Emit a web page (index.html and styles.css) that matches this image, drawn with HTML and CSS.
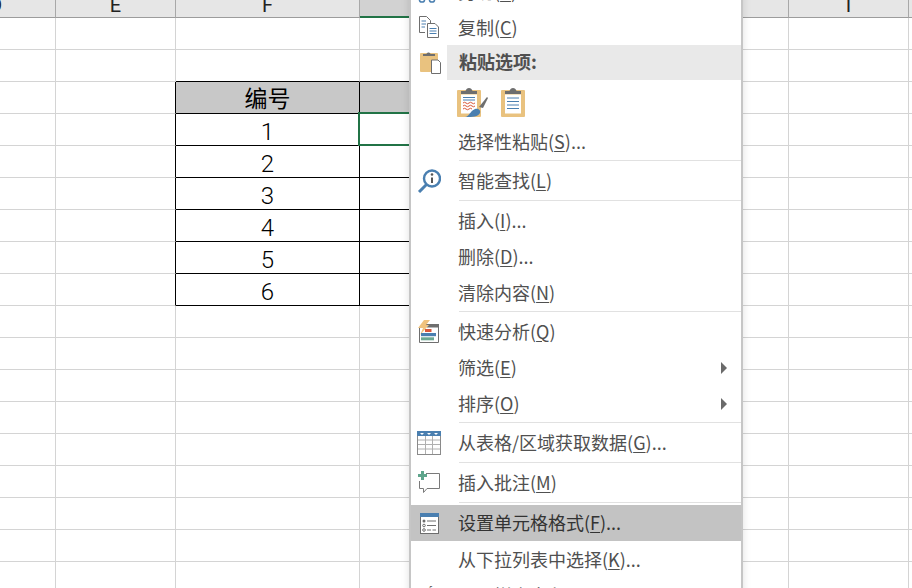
FILE: index.html
```html
<!DOCTYPE html>
<html lang="zh-CN">
<head>
<meta charset="utf-8">
<title>Excel 右键菜单</title>
<link rel="stylesheet" href="styles.css">
</head>
<body>
<div class="window">
  <table class="sheet">
    <colgroup><col class="w120"><col class="w120"><col class="w184"><col class="w184"><col class="w245"><col class="w120"><col class="w120"></colgroup>
    <tr class="head"><th>D</th><th>E</th><th>F</th><th class="active"></th><th></th><th>I</th><th></th></tr>
    <tr><td></td><td></td><td></td><td></td><td></td><td></td><td></td></tr>
    <tr><td></td><td></td><td class="kb"></td><td class="kb"></td><td></td><td></td><td></td></tr>
    <tr><td></td><td class="kr"></td><td class="title kr kb">编号</td><td class="title kb"></td><td></td><td></td><td></td></tr>
    <tr><td></td><td class="kr"></td><td class="kr kb">1</td><td class="kb sel"></td><td></td><td></td><td></td></tr>
    <tr><td></td><td class="kr"></td><td class="kr kb">2</td><td class="kb"></td><td></td><td></td><td></td></tr>
    <tr><td></td><td class="kr"></td><td class="kr kb">3</td><td class="kb"></td><td></td><td></td><td></td></tr>
    <tr><td></td><td class="kr"></td><td class="kr kb">4</td><td class="kb"></td><td></td><td></td><td></td></tr>
    <tr><td></td><td class="kr"></td><td class="kr kb">5</td><td class="kb"></td><td></td><td></td><td></td></tr>
    <tr><td></td><td class="kr"></td><td class="kr kb">6</td><td class="kb"></td><td></td><td></td><td></td></tr>
    <tr><td></td><td></td><td></td><td></td><td></td><td></td><td></td></tr>
    <tr><td></td><td></td><td></td><td></td><td></td><td></td><td></td></tr>
    <tr><td></td><td></td><td></td><td></td><td></td><td></td><td></td></tr>
    <tr><td></td><td></td><td></td><td></td><td></td><td></td><td></td></tr>
    <tr><td></td><td></td><td></td><td></td><td></td><td></td><td></td></tr>
    <tr><td></td><td></td><td></td><td></td><td></td><td></td><td></td></tr>
    <tr><td></td><td></td><td></td><td></td><td></td><td></td><td></td></tr>
    <tr><td></td><td></td><td></td><td></td><td></td><td></td><td></td></tr>
    <tr><td></td><td></td><td></td><td></td><td></td><td></td><td></td></tr>
  </table>

  <div class="menu">
    <div class="item">
      <span class="ico"><svg width="24" height="24" viewBox="0 0 24 24" fill="none"><circle cx="5" cy="19.500" r="2.600" stroke="#4a7fb0" stroke-width="1.500"/><circle cx="15" cy="19.500" r="2.600" stroke="#4a7fb0" stroke-width="1.500"/><path d="M6.500 17 14 3M13.500 17 6 3" stroke="#777"/></svg></span>
      <span class="lab">剪切(<u>T</u>)</span>
    </div>
    <div class="item copy">
      <span class="ico"><svg width="24" height="24" viewBox="0 0 24 24" fill="none"><path d="M8 16.500H2.500V.5H9.500L13.500 4.500V7" stroke="#6e6e6e"/><path d="M10.500 7.500H18L21.500 11V21.500H10.500Z" fill="#fff" stroke="#6e6e6e"/><path d="M4.500 5H9M4.500 8H9M4.500 11H8" stroke="#4a7fb0"/><path d="M12.500 12.500H19.500M12.500 15H19.500M12.500 17.500H19.500" stroke="#4a7fb0"/></svg></span>
      <span class="lab">复制(<u>C</u>)</span>
    </div>
    <div class="item paste">
      <span class="ico"><svg width="24" height="24" viewBox="0 0 24 24" fill="none"><rect x="3" y="2" width="18" height="19" rx="1" fill="#e9c27f"/><path d="M6 5V3H9.500C10 1 13 1 13.500 3H18V5Z" fill="#6e6e6e"/><path d="M14.500 9H21L23.500 11.500V22.500H14.500Z" fill="#fff" stroke="#6e6e6e"/></svg></span>
      <span class="lab">粘贴选项:</span>
    </div>
    <div class="opts">
      <svg width="32" height="30" viewBox="0 0 32 30" fill="none"><rect y="3" width="24" height="27" rx="1" fill="#e9c27f"/><path d="M4 7V4H8.500C9.500 0 14.500 0 15.500 4H20V7Z" fill="#6e6e6e"/><rect x="4" y="7.500" width="16" height="19" fill="#fff"/><path d="M6 10.500H18M6 13H18" stroke="#4a7fb0"/><path d="M6 16q1.500-1.500 3 0t3 0 3 0 3 0M6 19q1.500-1.500 3 0t3 0 3 0 3 0M6 22q1.500-1.500 3 0t3 0 3 0" stroke="#d9573a"/><path d="M22 20 30 10 31 11 26 21Z" fill="#6e6e6e"/><path d="M8 30C12 30 13 24 18 22 21 21 24 23 23 26 21 30 16 30 8 30Z" fill="#4a7fb0"/></svg>
      <svg width="24" height="30" viewBox="0 0 24 30" fill="none"><rect y="3" width="24" height="27" rx="1" fill="#e9c27f"/><path d="M4 7V4H8.500C9.500 0 14.500 0 15.500 4H20V7Z" fill="#6e6e6e"/><rect x="4" y="7.500" width="16" height="19" fill="#fff"/><path d="M6 11H18M6 14.500H18M6 18H18M6 21.500H18" stroke="#4a7fb0"/></svg>
    </div>
    <div class="item"><span class="ico"></span><span class="lab">选择性粘贴(<u>S</u>)...</span></div>
    <div class="sep"></div>
    <div class="item">
      <span class="ico"><svg width="24" height="24" viewBox="0 0 24 24" fill="none"><circle cx="15" cy="9.500" r="8" fill="#fff" stroke="#4a7fb0" stroke-width="2.400"/><path d="M9.500 15.500 2 23" stroke="#4a7fb0" stroke-width="3"/><path d="M15 8.500V14" stroke="#555" stroke-width="2"/><circle cx="15" cy="5.500" r="1.300" fill="#555"/></svg></span>
      <span class="lab">智能查找(<u>L</u>)</span>
    </div>
    <div class="sep gap"></div>
    <div class="item"><span class="ico"></span><span class="lab">插入(<u>I</u>)...</span></div>
    <div class="item"><span class="ico"></span><span class="lab">删除(<u>D</u>)...</span></div>
    <div class="item"><span class="ico"></span><span class="lab">清除内容(<u>N</u>)</span></div>
    <div class="sep"></div>
    <div class="item">
      <span class="ico"><svg width="24" height="24" viewBox="0 0 24 24" fill="none"><path d="M2.500 8V22.500H21.500V4.500H9" fill="#fff" stroke="#6e6e6e"/><rect x="10" y="4" width="12" height="3.500" fill="#6e6e6e"/><path d="M7 0H13L9 5H12L3 15 6 8H1Z" fill="#f0c27d"/><rect x="8" y="9" width="6.500" height="3" fill="#d9573a"/><rect x="4" y="13" width="15" height="3.200" fill="#4a7fb0"/><rect x="4" y="17.300" width="13" height="3" fill="#6aa892"/></svg></span>
      <span class="lab">快速分析(<u>Q</u>)</span>
    </div>
    <div class="item"><span class="ico"></span><span class="lab">筛选(<u>E</u>)</span><span class="arrow"></span></div>
    <div class="item"><span class="ico"></span><span class="lab">排序(<u>O</u>)</span><span class="arrow"></span></div>
    <div class="sep"></div>
    <div class="item">
      <span class="ico"><svg width="24" height="24" viewBox="0 0 24 24" fill="none"><rect x=".5" y=".5" width="23" height="23" fill="#fff" stroke="#8a8a8a"/><rect width="24" height="5" fill="#4a7fb0"/><path d="M3 2H7L5 4ZM10 2H14L12 4ZM17 2H21L19 4Z" fill="#fff"/><path d="M8.500 5V23M15.500 5V23M1 9H23M1 13.500H23M1 18H23" stroke="#b0b0b0"/></svg></span>
      <span class="lab">从表格/区域获取数据(<u>G</u>)...</span>
    </div>
    <div class="sep gap"></div>
    <div class="item">
      <span class="ico"><svg width="24" height="24" viewBox="0 0 24 24" fill="none"><path d="M9 2.500H22.500V17.500H10L6.500 21.500V17.500H2.500V10" stroke="#7a7a7a" stroke-linejoin="round"/><path d="M4 0H7V3H10V6H7V9H4V6H1V3H4Z" fill="#5fa58c"/></svg></span>
      <span class="lab">插入批注(<u>M</u>)</span>
    </div>
    <div class="sep gap"></div>
    <div class="item on">
      <span class="ico"><svg width="24" height="24" viewBox="0 0 24 24" fill="none"><rect x="3.500" y="2.500" width="18" height="20" fill="#fff" stroke="#6e6e6e"/><rect x="3" y="2" width="19" height="4" fill="#4a7fb0"/><circle cx="7" cy="10" r="1.500" fill="#6e6e6e"/><circle cx="7" cy="14.500" r="1.300" stroke="#6e6e6e"/><circle cx="7" cy="19" r="1.300" stroke="#6e6e6e"/><path d="M10 10H19M10 14.500H19M10 19H14M15.500 19H19" stroke="#6e6e6e"/></svg></span>
      <span class="lab">设置单元格格式(<u>F</u>)...</span>
    </div>
    <div class="item after">
      <span class="ico"></span>
      <span class="lab">从下拉列表中选择(<u>K</u>)...</span>
    </div>
    <div class="item">
      <span class="ico"><span class="wen">wén</span></span>
      <span class="lab">显示拼音字段(<u>S</u>)</span>
    </div>
  </div>
</div>
</body>
</html>
```
FILE: styles.css
```css
html, body { margin: 0; padding: 0; background: #fff; }
.window { position: relative; width: 912px; height: 588px; overflow: hidden; }

.sheet { border-collapse: separate; border-spacing: 0; table-layout: fixed; width: 993px; margin-left: -64px; font-family: Roboto, "Noto Sans CJK SC", sans-serif; }
.w120 { width: 120px; }
.w184 { width: 184px; }
.w245 { width: 245px; }
.sheet th, .sheet td { padding: 0; box-sizing: border-box; }
.sheet td { height: 32px; padding-top: 4px; border-right: 1px solid #d4d4d4; border-bottom: 1px solid #d4d4d4; text-align: center; font-size: 24px; font-weight: 300; line-height: 26px; color: #000; position: relative; }
.head th { height: 18px; background: #e6e6e6; border-right: 1px solid #a8a8a8; border-bottom: 1px solid #9c9c9c; font-size: 20px; font-weight: 400; line-height: 10px; color: #222; vertical-align: top; }
.head th.active { background: #d2d2d2; border-bottom: 2px solid #217346; }
.sheet td.kr { border-right-color: #000; }
.sheet td.kb { border-bottom-color: #000; }
.sheet td.title { background: #c8c8c8; font-size: 23px; font-weight: 400; }
.sel::after { content: ""; position: absolute; left: -2px; top: -2px; right: -1px; bottom: -1px; border: 2px solid #217346; }

.menu { position: absolute; left: 409px; top: -26px; width: 334px; box-sizing: border-box; background: #fff; border-left: 2px solid #c6c6c6; border-right: 2px solid #c6c6c6; box-shadow: 0 0 8px rgba(0, 0, 0, .12); font-family: "Noto Sans CJK SC", sans-serif; font-size: 18px; color: #505050; }
.item { display: flex; align-items: center; height: 36px; }
.item.copy { height: 35px; }
.item.paste { height: 35px; align-items: stretch; }
.ico { width: 36px; flex: none; display: flex; align-items: center; justify-content: center; }
.lab { padding-left: 11px; padding-bottom: 2px; white-space: nowrap; line-height: 34px; }
.lab u { text-underline-offset: 2px; }
.paste .lab { flex: 1; padding-left: 12px; padding-bottom: 0; background: #e9e9e9; font-weight: 700; line-height: 33px; font-size: 18px; }
.opts { display: flex; align-items: flex-start; gap: 12px; height: 44px; box-sizing: border-box; padding: 7px 0 0 46px; }
.sep { height: 1px; margin: 0 0 2px 48px; background: #e1e1e1; }
.sep.gap { margin-top: 1px; }
.item.on { background: #c3c3c3; color: #333; }
.item.after { margin-top: 1px; }
.arrow { margin-left: auto; margin-right: 14px; width: 0; height: 0; border-left: 6px solid #6a6a6a; border-top: 6px solid transparent; border-bottom: 6px solid transparent; }
.wen { font-family: "Noto Sans", sans-serif; font-size: 11px; font-weight: 700; position: relative; top: -7px; color: #505050; }
```
